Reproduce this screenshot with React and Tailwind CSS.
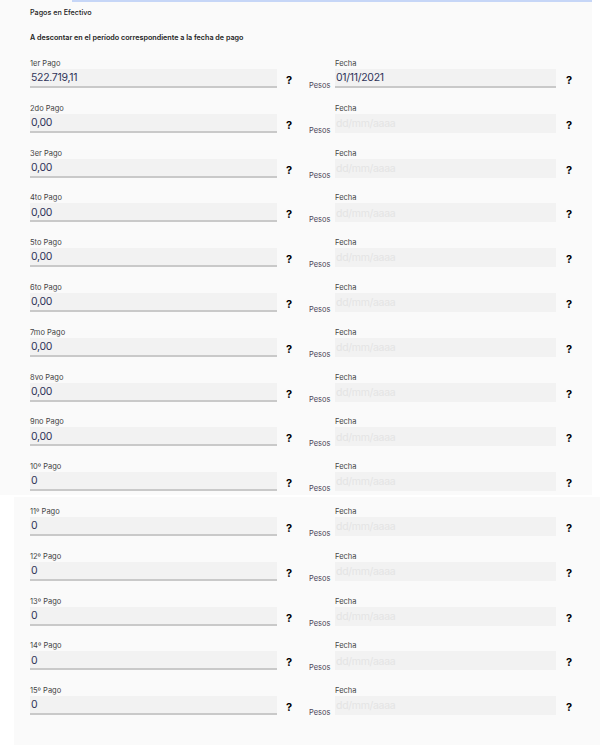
import React from "react";

const top = [
  ["1er Pago", "522.719,11", "01/11/2021"],
  ["2do Pago", "0,00"],
  ["3er Pago", "0,00"],
  ["4to Pago", "0,00"],
  ["5to Pago", "0,00"],
  ["6to Pago", "0,00"],
  ["7mo Pago", "0,00"],
  ["8vo Pago", "0,00"],
  ["9no Pago", "0,00"],
  ["10º Pago", "0"],
];
const bottom = [
  ["11º Pago", "0"],
  ["12º Pago", "0"],
  ["13º Pago", "0"],
  ["14º Pago", "0"],
  ["15º Pago", "0"],
];

function Row({ label, value, date }) {
  return (
    <div className="flex items-start h-[44.8px]">
      <div className="ml-[30px] w-[247px] flex flex-col">
        <div className="h-[11px] text-[7.5px] leading-[11px] text-[#444]">{label}</div>
        <div className="h-[19px] bg-[#f2f2f2] border-b-2 border-[#c9c9c9] flex items-center pl-[1px] pt-[1px] text-[10.5px] tracking-[-0.3px] text-[#2f3459]">
          {value}
        </div>
      </div>
      <div className="w-[32px] pl-[9px] mt-[16px] text-[11px] font-bold leading-[12px] text-black">?</div>
      <div className="w-[26px] mt-[23px] text-[7.5px] leading-[10px] text-[#4a4458]">Pesos</div>
      <div className="w-[221px] flex flex-col">
        <div className="h-[11px] text-[7.5px] leading-[11px] text-[#444]">Fecha</div>
        {date ? (
          <div className="h-[19px] bg-[#f2f2f2] border-b-2 border-[#c9c9c9] flex items-center pl-[1px] pt-[1px] text-[10.5px] tracking-[-0.3px] text-[#2f3459]">
            {date}
          </div>
        ) : (
          <div className="h-[19px] bg-[#f2f2f2] flex items-center pl-[1px] pt-[1px] text-[10.5px] tracking-[-0.3px] text-[#e4e4e4]">
            dd/mm/aaaa
          </div>
        )}
      </div>
      <div className="pl-[10px] mt-[16px] text-[11px] font-bold leading-[12px] text-black">?</div>
    </div>
  );
}

export default function App() {
  return (
    <div className="w-[600px] h-[745px] bg-white overflow-hidden" style={{ fontFamily: "Inter, 'Liberation Sans', sans-serif" }}>
      <div className="w-[592px] h-[495px] bg-[#fafafa]">
        <div className="ml-[72px] h-[2px] bg-[#c6d6f7]" />
        <div className="ml-[30px] mt-[5px] h-[12px] text-[7.2px] leading-[12px] font-medium text-[#222]">Pagos en Efectivo</div>
        <div className="ml-[30px] mt-[13px] h-[12px] text-[7.2px] leading-[12px] font-semibold text-[#222]">
          A descontar en el período correspondiente a la fecha de pago
        </div>
        <div className="mt-[14px] flex flex-col">
          {top.map(([l, v, d]) => (
            <Row key={l} label={l} value={v} date={d} />
          ))}
        </div>
      </div>
      <div className="mt-[2px] ml-[14px] w-[586px] h-[260px] bg-[#fafafa] pt-[9px]">
        <div className="-ml-[14px] flex flex-col">
          {bottom.map(([l, v]) => (
            <Row key={l} label={l} value={v} />
          ))}
        </div>
      </div>
    </div>
  );
}
